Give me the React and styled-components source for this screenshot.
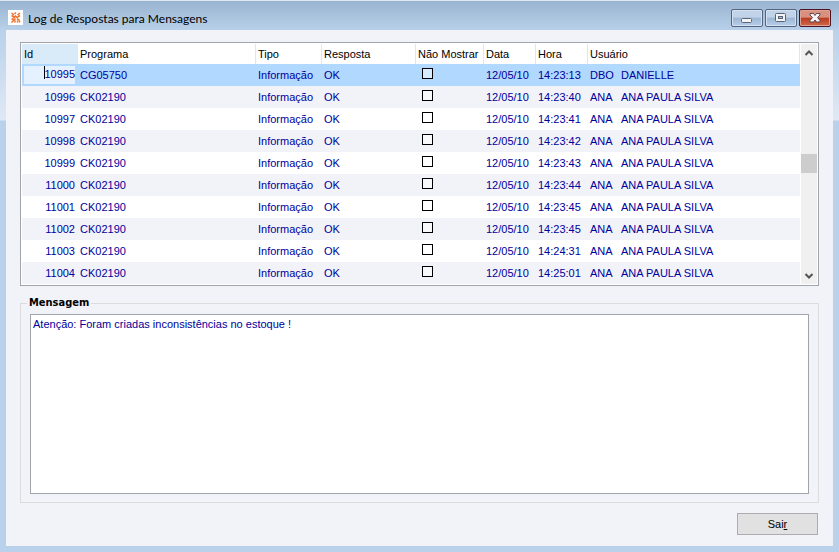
import React, { useState } from 'react'
import styled, { createGlobalStyle, css } from 'styled-components'

const GlobalStyle = createGlobalStyle`
  * {
    box-sizing: border-box;
  }

  html, body, #root {
    height: 100%;
    margin: 0;
  }

  body, button, input, textarea {
    font-family: Tahoma, 'Liberation Sans', sans-serif;
    font-size: 11px;
    color: #000;
  }
`

const Window = styled.div`
  display: flex;
  flex-direction: column;
  min-height: 100%;
  padding: 0 6px 6px;
  background:
    linear-gradient(#99b4d1 0, #b9d1ea 30px, #dfe9f5 119px, #b9d1ea 120px);
  border-top: 1px solid #dfe8f2;
`

const TitleBar = styled.header`
  display: flex;
  align-items: center;
  height: 29px;
  padding: 4px 2px 0;
`

const Title = styled.h1`
  flex-grow: 1;
  margin: 0 0 0 4px;
  padding-top: 2px;
  font-family: Lato, sans-serif;
  font-size: 12px;
  font-weight: normal;
  line-height: 16px;
`

const Controls = styled.div`
  display: flex;
  gap: 2px;
`

const ControlButton = styled.button`
  display: flex;
  justify-content: center;
  align-items: center;
  width: 32px;
  height: 18px;
  padding: 0;
  border: 1px solid #53657f;
  border-radius: 2px;
  box-shadow: inset 0 0 0 1px #d3e1f1;
  background: linear-gradient(#c0d3e9 45%, #9cb6d3 50%, #b7cfe9);
  ${({ $danger }) => $danger && css`
    border-color: #4c1420;
    box-shadow: inset 0 0 0 1px #dfa196;
    background: linear-gradient(#d9917f 45%, #bb3a22 50%, #cf6a48);
  `}
`

const Client = styled.main`
  display: flex;
  flex-grow: 1;
  flex-direction: column;
  padding: 12px 14px 11px;
  background-color: #f2f3f9;
`

const Grid = styled.div`
  display: flex;
  gap: 1px;
  padding: 1px;
  border: 1px solid #a2a4a9;
  background-color: #fff;
`

const Table = styled.table`
  flex-grow: 1;
  width: 0;
  table-layout: fixed;
  border-collapse: separate;
  border-spacing: 0;
`

const Column = styled.col`
  width: ${({ $width }) => $width ? `${$width}px` : 'auto'};
`

const HeadCell = styled.th`
  height: 20px;
  padding: 0 2px;
  border-right: 1px solid ${({ $active }) => $active ? '#d9ebf9' : '#e5e5e5'};
  background-color: ${({ $active }) => $active ? '#d9ebf9' : '#fff'};
  font-weight: normal;
  line-height: 16px;
  text-align: left;
  white-space: nowrap;
`

const Row = styled.tr`
  background-color: #fff;

  &:nth-child(even) {
    background-color: #f2f3f9;
  }

  &:first-child {
    background-color: #b1d8ff;
  }
`

const Cell = styled.td`
  height: 22px;
  padding: 0 ${({ $right }) => $right ? 3 : 2}px 0 2px;
  color: #00009b;
  line-height: 16px;
  text-align: ${({ $right }) => $right ? 'right' : 'left'};
  white-space: nowrap;
`

const Editor = styled.div`
  position: relative;
`

const IdInput = styled.input`
  display: block;
  width: 100%;
  height: 18px;
  padding: 0 0 3px;
  border: 0;
  outline: 0;
  background-color: #e5f1ff;
  color: #00009b;
  text-align: right;
`

const Caret = styled.span`
  position: absolute;
  top: 0;
  right: 30px;
  width: 1px;
  height: 13px;
  background-color: #000;
`

const Check = styled.input`
  display: block;
  appearance: none;
  width: 11px;
  height: 11px;
  margin: 0 0 3px 4px;
  border: 1px solid #000;
  background-color: rgba(255, 255, 255, 0.5);

  &:checked {
    background-color: #000;
  }
`

const User = styled.span`
  display: grid;
  grid-template-columns: 31px 1fr;
`

const ScrollBar = styled.div`
  display: flex;
  flex-direction: column;
  width: 16px;
  background-color: #f0f0f0;
`

const ScrollButton = styled.button`
  height: 17px;
  padding: 0;
  border: 0;
  background: none;
  line-height: 0;
`

const Track = styled.div`
  display: grid;
  flex-grow: 1;
  grid-template-rows: 93fr 19fr 94fr;
`

const Thumb = styled.div`
  grid-row: 2;
  background-color: #cdcdcd;
`

const Group = styled.fieldset`
  flex-grow: 1;
  min-width: 0;
  margin: 10px 0 0;
  padding: 4px 9px 8px;
  border: 1px solid #dcdcdc;
`

const Legend = styled.legend`
  margin-left: -3px;
  padding: 0 2px;
  font-family: 'DejaVu Sans Condensed', 'DejaVu Sans', sans-serif;
  font-weight: bold;
  line-height: 14px;
`

const Message = styled.textarea`
  display: block;
  width: 100%;
  padding: 1px 2px;
  border: 1px solid #a2a4a9;
  outline: 0;
  background-color: #fff;
  color: #00009b;
  line-height: 16px;
  resize: none;
`

const Footer = styled.footer`
  display: flex;
  justify-content: flex-end;
  padding: 10px 1px 0;
`

const Button = styled.button`
  width: 81px;
  height: 22px;
  padding: 0;
  border: 1px solid #adadad;
  background-color: #e1e1e1;
  line-height: 16px;
`

const columns = [
  { label: 'Id', width: 56, active: true },
  { label: 'Programa', width: 178 },
  { label: 'Tipo', width: 66 },
  { label: 'Resposta', width: 94 },
  { label: 'Não Mostrar', width: 68 },
  { label: 'Data', width: 52 },
  { label: 'Hora', width: 52 },
  { label: 'Usuário' },
]

const rows = [
  ['10995', 'CG05750', '14:23:13', 'DBO', 'DANIELLE'],
  ['10996', 'CK02190', '14:23:40', 'ANA', 'ANA PAULA SILVA'],
  ['10997', 'CK02190', '14:23:41', 'ANA', 'ANA PAULA SILVA'],
  ['10998', 'CK02190', '14:23:42', 'ANA', 'ANA PAULA SILVA'],
  ['10999', 'CK02190', '14:23:43', 'ANA', 'ANA PAULA SILVA'],
  ['11000', 'CK02190', '14:23:44', 'ANA', 'ANA PAULA SILVA'],
  ['11001', 'CK02190', '14:23:45', 'ANA', 'ANA PAULA SILVA'],
  ['11002', 'CK02190', '14:23:45', 'ANA', 'ANA PAULA SILVA'],
  ['11003', 'CK02190', '14:24:31', 'ANA', 'ANA PAULA SILVA'],
  ['11004', 'CK02190', '14:25:01', 'ANA', 'ANA PAULA SILVA'],
]

const AppIcon = () => (
  <svg width="16" height="16" viewBox="0 0 16 16" aria-hidden="true">
    <rect width="15" height="15" fill="#fff" />
    <g stroke="#f0702c" strokeWidth="1.5" fill="none">
      <path d="M3.500 3L6 5M8 2.500L6.500 4M12 3L9.500 5M3.500 5.500L6 7M12 5.500L9.500 7M5.500 8l2-2 2 2M3.500 9.500l2-1M3.500 12.500l4-4M9 9l2.500 1M6.500 12.500l1-2M9.500 10.500v2M11.500 10.500v2" />
    </g>
  </svg>
)

const MinimizeIcon = () => (
  <svg width="12" height="12" viewBox="0 0 12 12" aria-hidden="true">
    <rect x="0.500" y="6.500" width="10" height="4" rx="1" fill="#f4f4f4" stroke="#5a6478" />
  </svg>
)

const MaximizeIcon = () => (
  <svg width="12" height="10" viewBox="0 0 12 10" aria-hidden="true">
    <rect x="0.500" y="0.500" width="10" height="8" rx="1" fill="#f4f4f4" stroke="#5a6478" />
    <rect x="3.500" y="3.500" width="4" height="2" fill="#a5bcd8" stroke="#5a6478" />
  </svg>
)

const CloseIcon = () => (
  <svg width="12" height="10" viewBox="0 0 12 10" aria-hidden="true">
    <path d="M1 0.500h3.500L6 2.500l1.500-2H11V2L8.500 4.500 11 7.500V9H7.500L6 7 4.500 9H1V7.500l2.500-3L1 2z" fill="#f6f6f6" stroke="#5c4652" />
  </svg>
)

const Arrow = ({ down }) => (
  <svg width="8" height="6" viewBox="0 0 8 6" aria-hidden="true">
    <path d={down ? 'M0.500 1l3.500 3.500L7.500 1' : 'M0.500 5L4 1.500 7.500 5'} fill="none" stroke="#555" strokeWidth="2" />
  </svg>
)

const App = () => {
  const [message, setMessage] = useState('Atenção: Foram criadas inconsistências no estoque !')

  return (
    <Window>
      <GlobalStyle />
      <TitleBar>
        <AppIcon />
        <Title>Log de Respostas para Mensagens</Title>
        <Controls>
          <ControlButton aria-label="Minimizar"><MinimizeIcon /></ControlButton>
          <ControlButton aria-label="Maximizar"><MaximizeIcon /></ControlButton>
          <ControlButton aria-label="Fechar" $danger><CloseIcon /></ControlButton>
        </Controls>
      </TitleBar>
      <Client>
        <Grid>
          <Table>
            <colgroup>
              {columns.map(({ label, width }) => <Column key={label} $width={width} />)}
            </colgroup>
            <thead>
              <tr>
                {columns.map(({ label, active }) => (
                  <HeadCell key={label} scope="col" $active={active}>{label}</HeadCell>
                ))}
              </tr>
            </thead>
            <tbody>
              {rows.map(([id, program, time, login, name], i) => (
                <Row key={id}>
                  <Cell $right>
                    {i === 0 ? (
                      <Editor>
                        <IdInput aria-label="Id" defaultValue={id} />
                        <Caret />
                      </Editor>
                    ) : id}
                  </Cell>
                  <Cell>{program}</Cell>
                  <Cell>Informação</Cell>
                  <Cell>OK</Cell>
                  <Cell><Check type="checkbox" aria-label={`Não mostrar ${id}`} /></Cell>
                  <Cell>12/05/10</Cell>
                  <Cell>{time}</Cell>
                  <Cell><User><span>{login}</span><span>{name}</span></User></Cell>
                </Row>
              ))}
            </tbody>
          </Table>
          <ScrollBar>
            <ScrollButton aria-label="Rolar para cima"><Arrow /></ScrollButton>
            <Track><Thumb /></Track>
            <ScrollButton aria-label="Rolar para baixo"><Arrow down /></ScrollButton>
          </ScrollBar>
        </Grid>
        <Group>
          <Legend>Mensagem</Legend>
          <Message
            aria-label="Mensagem"
            rows={11}
            value={message}
            onChange={e => setMessage(e.target.value)}
          />
        </Group>
        <Footer>
          <Button>Sai<u>r</u></Button>
        </Footer>
      </Client>
    </Window>
  )
}

export default App
